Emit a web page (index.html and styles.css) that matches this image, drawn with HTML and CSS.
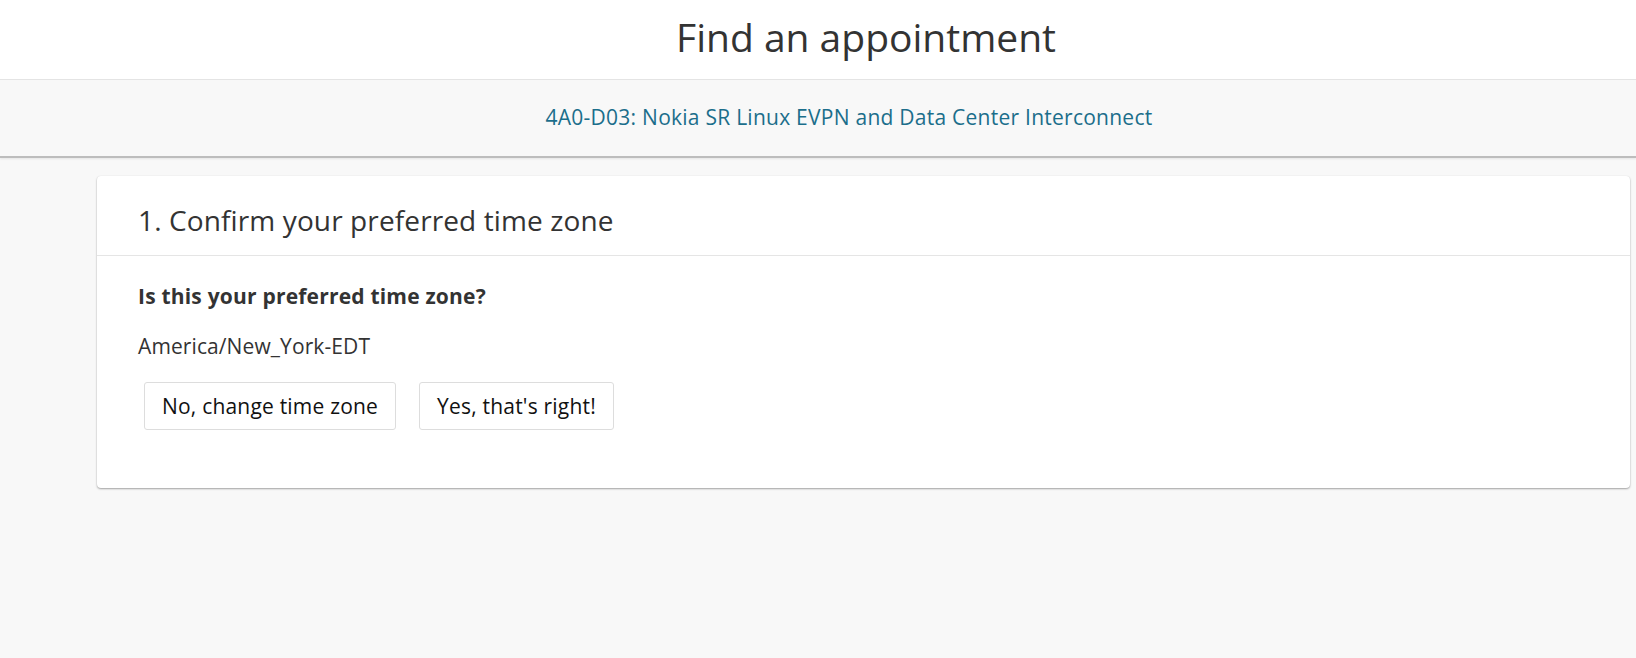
FILE: index.html
```html
<!DOCTYPE html>
<html lang="en">
<head>
<meta charset="utf-8">
<title>Find an appointment</title>
<link rel="stylesheet" href="styles.css">
</head>
<body>
<header class="page-header">
  <h1 class="page-title">Find an appointment</h1>
</header>
<div class="subbar">
  <a class="exam-link" href="#">4A0-D03: Nokia SR Linux EVPN and Data Center Interconnect</a>
</div>
<main class="content">
  <section class="card">
    <div class="card-header">
      <h2 class="card-title">1. Confirm your preferred time zone</h2>
    </div>
    <div class="card-body">
      <p class="question">Is this your preferred time zone?</p>
      <p class="tz">America/New_York-EDT</p>
      <div class="actions">
        <button class="btn" type="button">No, change time zone</button>
        <button class="btn" type="button">Yes, that's right!</button>
      </div>
    </div>
  </section>
</main>
</body>
</html>
```
FILE: styles.css
```css
html, body {
  margin: 0;
  padding: 0;
}
body {
  background: #f8f8f8;
  font-family: "Open Sans", "Noto Sans", "Liberation Sans", sans-serif;
  color: #333;
  min-height: 658px;
}
.page-header {
  background: #fff;
  height: 80px;
  box-sizing: border-box;
  padding: 12px 0 0 96px;
  border-bottom: 1px solid #e5e5e5;
  text-align: center;
}
.page-title {
  margin: 0;
  font-size: 39px;
  font-weight: 400;
  line-height: 50px;
  color: #333;
}
.subbar {
  background: #f8f8f8;
  padding: 25px 0 25px 62px;
  text-align: center;
  line-height: 24px;
  border-bottom: 2px solid #bdbdbd;
  box-shadow: 0 1px 2px rgba(0,0,0,0.08);
}
.exam-link {
  font-size: 21px;
  letter-spacing: 0.25px;
  color: #1b6e8b;
  text-decoration: none;
}
.content {
  padding: 18px 6px 0 97px;
}
.card {
  background: #fff;
  border-radius: 4px;
  box-shadow: 0 1px 2px rgba(0,0,0,0.35), 0 0 1px rgba(0,0,0,0.08);
}
.card-header {
  padding: 25px 41px 16px;
  border-bottom: 1px solid #e5e5e5;
}
.card-title {
  margin: 0;
  font-size: 28px;
  letter-spacing: 0.12px;
  font-weight: 400;
  line-height: 38px;
  color: #333;
}
.card-body {
  padding: 28px 41px 58px;
}
.question {
  margin: 0;
  font-size: 21px;
  letter-spacing: 0.2px;
  font-weight: 700;
  line-height: 24px;
  color: #333;
}
.tz {
  margin: 26px 0 0;
  font-size: 21px;
  letter-spacing: 0.1px;
  line-height: 24px;
  color: #333;
}
.actions {
  display: flex;
  gap: 23px;
  margin: 24px 0 0 6px;
}
.btn {
  height: 48px;
  padding: 0 17px;
  background: #fff;
  border: 1px solid #ddd;
  border-radius: 3px;
  font-family: inherit;
  font-size: 21px;
  letter-spacing: 0.2px;
  color: #111;
  cursor: pointer;
}
```
